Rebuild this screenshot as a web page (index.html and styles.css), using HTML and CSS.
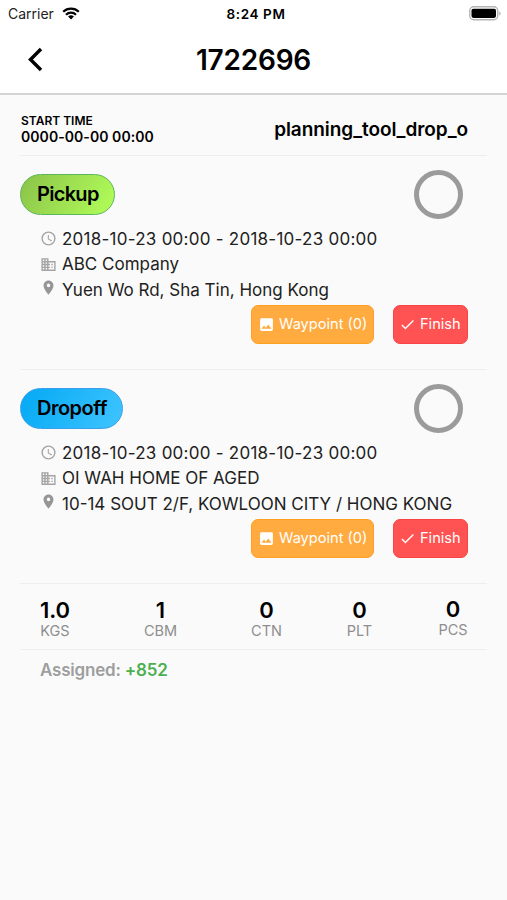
FILE: index.html
```html
<!DOCTYPE html>
<html>
<head>
<meta charset="utf-8">
<meta name="viewport" content="width=device-width, initial-scale=1.0">
<title>1722696</title>
<link rel="stylesheet" href="styles.css">
</head>
<body>
<!-- shared icons -->
<svg class="icon-defs">
    <symbol id="clock" viewBox="0 0 24 24"><path d="M12 2a10 10 0 1 0 0 20 10 10 0 0 0 0-20zm0 18a8 8 0 1 1 0-16 8 8 0 0 1 0 16zm.5-13H11v6l5.2 3.2.8-1.3-4.500-2.700z"/></symbol>
    <symbol id="business" viewBox="0 0 24 24"><path d="M12 7V3H2v18h20V7H12zM6 19H4v-2h2v2zm0-4H4v-2h2v2zm0-4H4V9h2v2zm0-4H4V5h2v2zm4 12H8v-2h2v2zm0-4H8v-2h2v2zm0-4H8V9h2v2zm0-4H8V5h2v2zm10 12h-8v-2h2v-2h-2v-2h2v-2h-2V9h8v10zm-2-8h-2v2h2v-2zm0 4h-2v2h2v-2z"/></symbol>
    <symbol id="place" viewBox="0 0 24 24"><path d="M12 2C8.130 2 5 5.130 5 9c0 5.250 7 13 7 13s7-7.750 7-13c0-3.870-3.130-7-7-7zm0 9.500a2.500 2.500 0 1 1 0-5 2.500 2.500 0 0 1 0 5z"/></symbol>
    <symbol id="image" viewBox="0 0 24 24"><path d="M21 19V5a2 2 0 0 0-2-2H5a2 2 0 0 0-2 2v14c0 1.100.9 2 2 2h14a2 2 0 0 0 2-2zM8.500 13.500l2.500 3 3.500-4.500 4.500 6H5l3.500-4.500z"/></symbol>
    <symbol id="check" viewBox="0 0 24 24"><path d="M9 16.200L4.800 12l-1.400 1.400L9 19 21 7l-1.400-1.400L9 16.200z"/></symbol>
</svg>

<div class="status-bar">
    <div class="carrier">
        <span>Carrier</span>
        <svg class="wifi" viewBox="0 0 18 13">
            <path d="M1.200 4.700a11.200 11.200 0 0 1 15.600 0M4 7.700a7.200 7.200 0 0 1 10 0" fill="none" stroke="#000" stroke-width="2.200"/>
            <path d="M9 12.500L6.100 9.600a4.200 4.200 0 0 1 5.800 0z"/>
        </svg>
    </div>
    <div class="clock-time">8:24 PM</div>
    <svg class="battery" viewBox="0 0 32 15">
        <rect x=".75" y=".75" width="28" height="13" rx="4" fill="none" stroke="#b4b4b4" stroke-width="1.400"/>
        <rect x="2.500" y="2.700" width="24.500" height="9.200" rx="1.800"/>
        <path d="M30.200 5.500v4q1.500-.6 1.500-2t-1.500-2z" fill="#b4b4b4"/>
    </svg>
</div>

<header class="header">
    <svg class="back" viewBox="0 0 16 25"><path d="M14 2L3.500 12.500 14 23" fill="none" stroke="#000" stroke-width="3.400"/></svg>
    <h1>1722696</h1>
</header>

<main class="content">
    <section class="summary">
        <div class="start">
            <div class="start-label">START TIME</div>
            <div class="start-value">0000-00-00 00:00</div>
        </div>
        <div class="tool">planning_tool_drop_o</div>
    </section>

    <section class="stop">
        <div class="stop-head">
            <span class="tag pickup">Pickup</span>
            <span class="ring"></span>
        </div>
        <div class="info">
            <div class="row time"><svg><use href="#clock"/></svg><span>2018-10-23 00:00 - 2018-10-23 00:00</span></div>
            <div class="row company"><svg><use href="#business"/></svg><span>ABC Company</span></div>
            <div class="row place"><svg><use href="#place"/></svg><span>Yuen Wo Rd, Sha Tin, Hong Kong</span></div>
        </div>
        <div class="actions">
            <button class="btn waypoint"><svg><use href="#image"/></svg><span>Waypoint (0)</span></button>
            <button class="btn finish"><svg><use href="#check"/></svg><span>Finish</span></button>
        </div>
    </section>

    <section class="stop">
        <div class="stop-head">
            <span class="tag dropoff">Dropoff</span>
            <span class="ring"></span>
        </div>
        <div class="info">
            <div class="row time"><svg><use href="#clock"/></svg><span>2018-10-23 00:00 - 2018-10-23 00:00</span></div>
            <div class="row company"><svg><use href="#business"/></svg><span>OI WAH HOME OF AGED</span></div>
            <div class="row place"><svg><use href="#place"/></svg><span>10-14 SOUT 2/F, KOWLOON CITY / HONG KONG</span></div>
        </div>
        <div class="actions">
            <button class="btn waypoint"><svg><use href="#image"/></svg><span>Waypoint (0)</span></button>
            <button class="btn finish"><svg><use href="#check"/></svg><span>Finish</span></button>
        </div>
    </section>

    <section class="totals">
        <div class="total"><b>1.0</b><span>KGS</span></div>
        <div class="total"><b>1</b><span>CBM</span></div>
        <div class="total"><b>0</b><span>CTN</span></div>
        <div class="total"><b>0</b><span>PLT</span></div>
        <div class="total last"><b>0</b><span>PCS</span></div>
    </section>

    <div class="assigned">Assigned: <span>+852</span></div>
</main>
</body>
</html>
```

FILE: styles.css
```css
* {
    box-sizing: border-box;
}
body {
    margin: 0;
    min-height: 100vh;
    background: #fafafa;
    color: #000;
    font-family: Inter, "Liberation Sans", sans-serif;
    overflow: hidden;
}
svg {
    display: block;
    flex: none;
}
.icon-defs {
    display: none;
}

/* status bar */
.status-bar {
    display: grid;
    grid-template-columns: 1fr auto 1fr;
    align-items: center;
    height: 27px;
    padding: 0 6px 0 8px;
    background: #fff;
    font-size: 14px;
}
.carrier {
    display: flex;
    align-items: center;
    gap: 8px;
    color: #222;
}
.wifi {
    width: 18px;
    height: 13px;
}
.clock-time {
    padding-left: 3px;
    font-size: 13.5px;
    font-weight: 600;
    letter-spacing: 0.6px;
}
.battery {
    width: 32px;
    height: 15px;
    justify-self: end;
}

/* title bar */
.header {
    display: grid;
    grid-template-columns: 44px 1fr 44px;
    align-items: center;
    height: 68px;
    padding-bottom: 1px;
    background: #fff;
    border-bottom: 2px solid #d4d4d4;
}
.back {
    width: 16px;
    height: 25px;
    margin-left: 27px;
}
.header h1 {
    margin: 0;
    text-align: center;
    font-size: 28px;
    font-weight: 600;
    line-height: 34px;
    letter-spacing: -0.2px;
}

.content {
    padding: 0 20px;
}
.summary {
    display: flex;
    justify-content: space-between;
    height: 61px;
    padding: 18px 19px 0 1px;
    border-bottom: 1px solid #eee;
}
.start-label {
    font-size: 12px;
    font-weight: 600;
    line-height: 16px;
}
.start-value {
    font-size: 14px;
    font-weight: 600;
    line-height: 15px;
    letter-spacing: 0.06px;
}
.tool {
    font-size: 19px;
    font-weight: 600;
    line-height: 34px;
    letter-spacing: -0.06px;
}

/* pickup / dropoff */
.stop {
    height: 214px;
    padding-top: 13px;
    border-bottom: 1px solid #eee;
}
.stop-head {
    display: flex;
    align-items: center;
    justify-content: space-between;
    height: 50px;
    padding-right: 24px;
}
.tag {
    height: 41px;
    padding: 0 16px;
    border: 1px solid;
    border-radius: 21px;
    font-size: 20px;
    font-weight: 600;
    line-height: 38px;
}
.pickup {
    width: 95px;
    border-color: #5cb75a;
    background: linear-gradient(120deg, #8bc34a, #b2ff59);
    letter-spacing: -0.7px;
}
.dropoff {
    width: 103px;
    border-color: #3a9fea;
    background: linear-gradient(120deg, #03a9f4, #40c4ff);
    letter-spacing: -0.5px;
}
.ring {
    width: 49px;
    height: 49px;
    border: 5px solid #9b9b9b;
    border-radius: 50%;
}
.info {
    padding: 7px 0 0 20px;
}
.row {
    display: flex;
    align-items: center;
    gap: 6px;
    height: 25.600px;
    color: #212121;
    font-size: 17px;
    white-space: nowrap;
}
.row svg {
    width: 17px;
    height: 17px;
    margin-right: -1px;
    fill: #a4a4a4;
}
.row.time {
    letter-spacing: 0.25px;
}
.row.place svg {
    margin-top: -4px;
    fill: #969696;
}
.actions {
    display: flex;
    justify-content: flex-end;
    gap: 19px;
    margin-top: 2px;
    padding-right: 19px;
}
.btn {
    display: flex;
    align-items: center;
    gap: 4px;
    height: 39px;
    padding: 0 6px;
    border: 1px solid;
    border-radius: 7px;
    color: #fff;
    font-family: inherit;
    font-size: 14.6px;
    white-space: nowrap;
}
.btn svg {
    width: 17px;
    height: 17px;
    fill: #fff;
}
.waypoint {
    width: 123px;
    background: #ffab40;
    border-color: #ffa020;
}
.finish {
    width: 75px;
    padding-left: 5px;
    background: #ff5252;
    border-color: #fa4444;
}

/* totals */
.totals {
    display: grid;
    grid-template-columns: 70px 141px 71px 115px 72px;
    height: 66px;
    padding-top: 14px;
    border-bottom: 1px solid #eee;
}
.total {
    text-align: center;
}
.total.last {
    margin-top: -1px;
}
.total b {
    display: block;
    font-size: 22px;
    font-weight: 600;
    line-height: 25px;
}
.total span {
    display: block;
    color: #8e8e8e;
    font-size: 14.500px;
    line-height: 16px;
}
.assigned {
    padding: 9px 20px;
    color: #9e9e9e;
    font-size: 17px;
    font-weight: 600;
    line-height: 22px;
    letter-spacing: -0.2px;
}
.assigned span {
    color: #4caf50;
}
```
